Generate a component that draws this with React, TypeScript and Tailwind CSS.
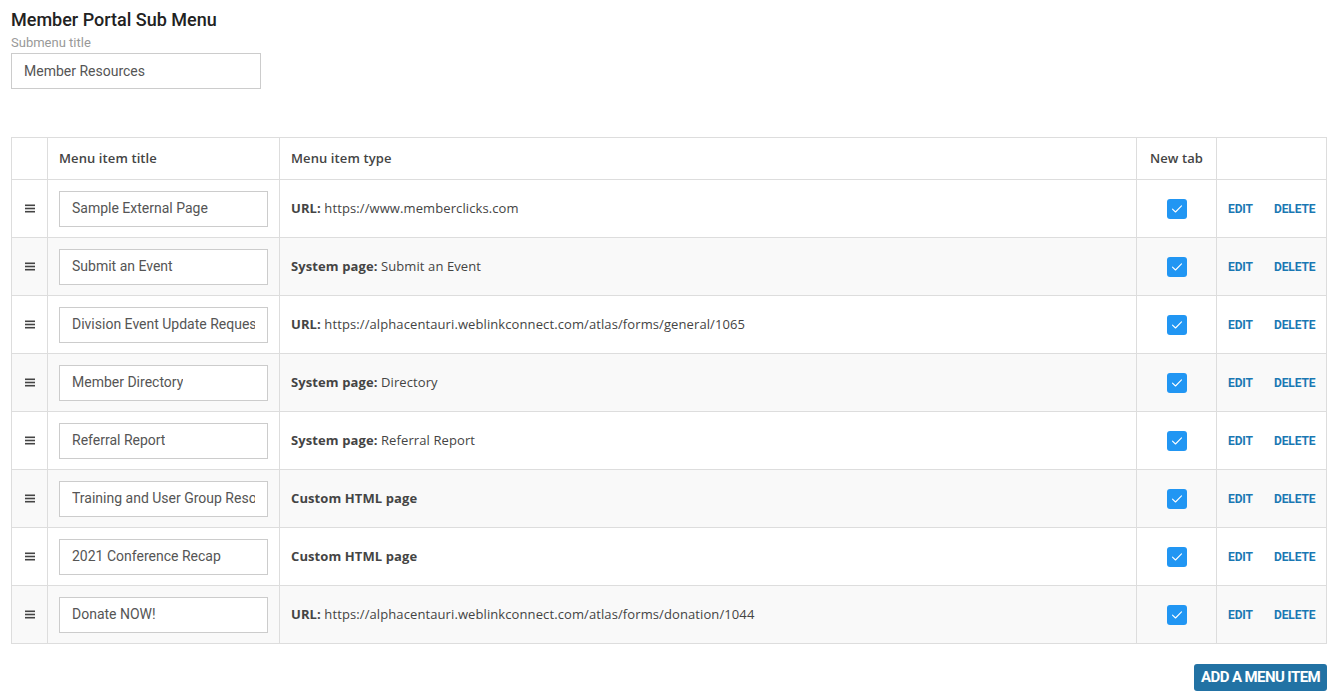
import React from "react";

const rows = [
  { title: "Sample External Page", label: "URL:", value: "https://www.memberclicks.com" },
  { title: "Submit an Event", label: "System page:", value: "Submit an Event" },
  { title: "Division Event Update Request", label: "URL:", value: "https://alphacentauri.weblinkconnect.com/atlas/forms/general/1065" },
  { title: "Member Directory", label: "System page:", value: "Directory" },
  { title: "Referral Report", label: "System page:", value: "Referral Report" },
  { title: "Training and User Group Resources", label: "Custom HTML page", value: "" },
  { title: "2021 Conference Recap", label: "Custom HTML page", value: "" },
  { title: "Donate NOW!", label: "URL:", value: "https://alphacentauri.weblinkconnect.com/atlas/forms/donation/1044" },
];

function Check() {
  return (
    <div className="w-[20px] h-[20px] rounded-[3px] bg-[#2196f3] flex items-center justify-center">
      <svg width="12" height="10" viewBox="0 0 12 10" fill="none">
        <path d="M1.5 5.2 L4.5 8 L10.5 1.8" stroke="white" strokeWidth="1.1" strokeLinecap="round" strokeLinejoin="round" />
      </svg>
    </div>
  );
}

export default function App() {
  return (
    <div className="bg-white min-h-[698px] px-[11px] pt-[9px] font-['Open_Sans',sans-serif] text-[#444]">
      <h1 className="font-['Roboto',sans-serif] font-medium text-[18px] leading-[22px] text-[#222]">Member Portal Sub Menu</h1>
      <div className="font-['Roboto',sans-serif] text-[13px] leading-[16px] text-[#999] mt-[4px]">Submenu title</div>
      <div className="mt-[2px] w-[250px] h-[36px] border border-[#ccc] flex items-center px-[12px] font-['Roboto',sans-serif] text-[14px] text-[#555]">
        Member Resources
      </div>

      <table className="mt-[48px] w-[1316px] border-collapse text-[13px] tracking-[0.1px]">
        <thead>
          <tr className="h-[42px]">
            <th className="w-[36px] border border-[#ddd]"></th>
            <th className="w-[232px] border border-[#ddd] text-left pl-[11px] font-semibold">Menu item title</th>
            <th className="border border-[#ddd] text-left pl-[11px] font-semibold">Menu item type</th>
            <th className="w-[80px] border border-[#ddd] text-center font-semibold">New tab</th>
            <th className="w-[110px] border border-[#ddd]"></th>
          </tr>
        </thead>
        <tbody>
          {rows.map((r, i) => (
            <tr key={i} className={`h-[58px] ${i % 2 === 1 ? "bg-[#f9f9f9]" : "bg-white"}`}>
              <td className="border border-[#ddd] text-center">
                <div className="flex justify-center">
                  <svg width="10" height="9" viewBox="0 0 10 9">
                    <rect x="0" y="0.5" width="10" height="1.6" fill="#444" />
                    <rect x="0" y="3.7" width="10" height="1.6" fill="#444" />
                    <rect x="0" y="6.9" width="10" height="1.6" fill="#444" />
                  </svg>
                </div>
              </td>
              <td className="border border-[#ddd] pl-[11px]">
                <div className="w-[209px] h-[36px] border border-[#ccc] bg-white flex items-center px-[12px] font-['Roboto',sans-serif] text-[14px] text-[#555] tracking-normal">
                  <span className="block overflow-hidden whitespace-nowrap">{r.title}</span>
                </div>
              </td>
              <td className="border border-[#ddd] pl-[11px]">
                <span className="font-bold">{r.label}</span>
                {r.value && <span> {r.value}</span>}
              </td>
              <td className="border border-[#ddd]">
                <div className="flex justify-center">
                  <Check />
                </div>
              </td>
              <td className="border border-[#ddd]">
                <div className="flex items-center gap-[21px] pl-[11px] font-['Roboto',sans-serif] font-bold text-[12px] text-[#1a78b3] tracking-[-0.1px]">
                  <span>EDIT</span>
                  <span>DELETE</span>
                </div>
              </td>
            </tr>
          ))}
        </tbody>
      </table>

      <div className="w-[1316px] flex justify-end mt-[20px]">
        <button className="h-[27px] px-[7px] rounded-[3px] bg-[#2272a4] text-white font-['Roboto',sans-serif] font-bold text-[15px] tracking-[-0.6px]">
          ADD A MENU ITEM
        </button>
      </div>
    </div>
  );
}
